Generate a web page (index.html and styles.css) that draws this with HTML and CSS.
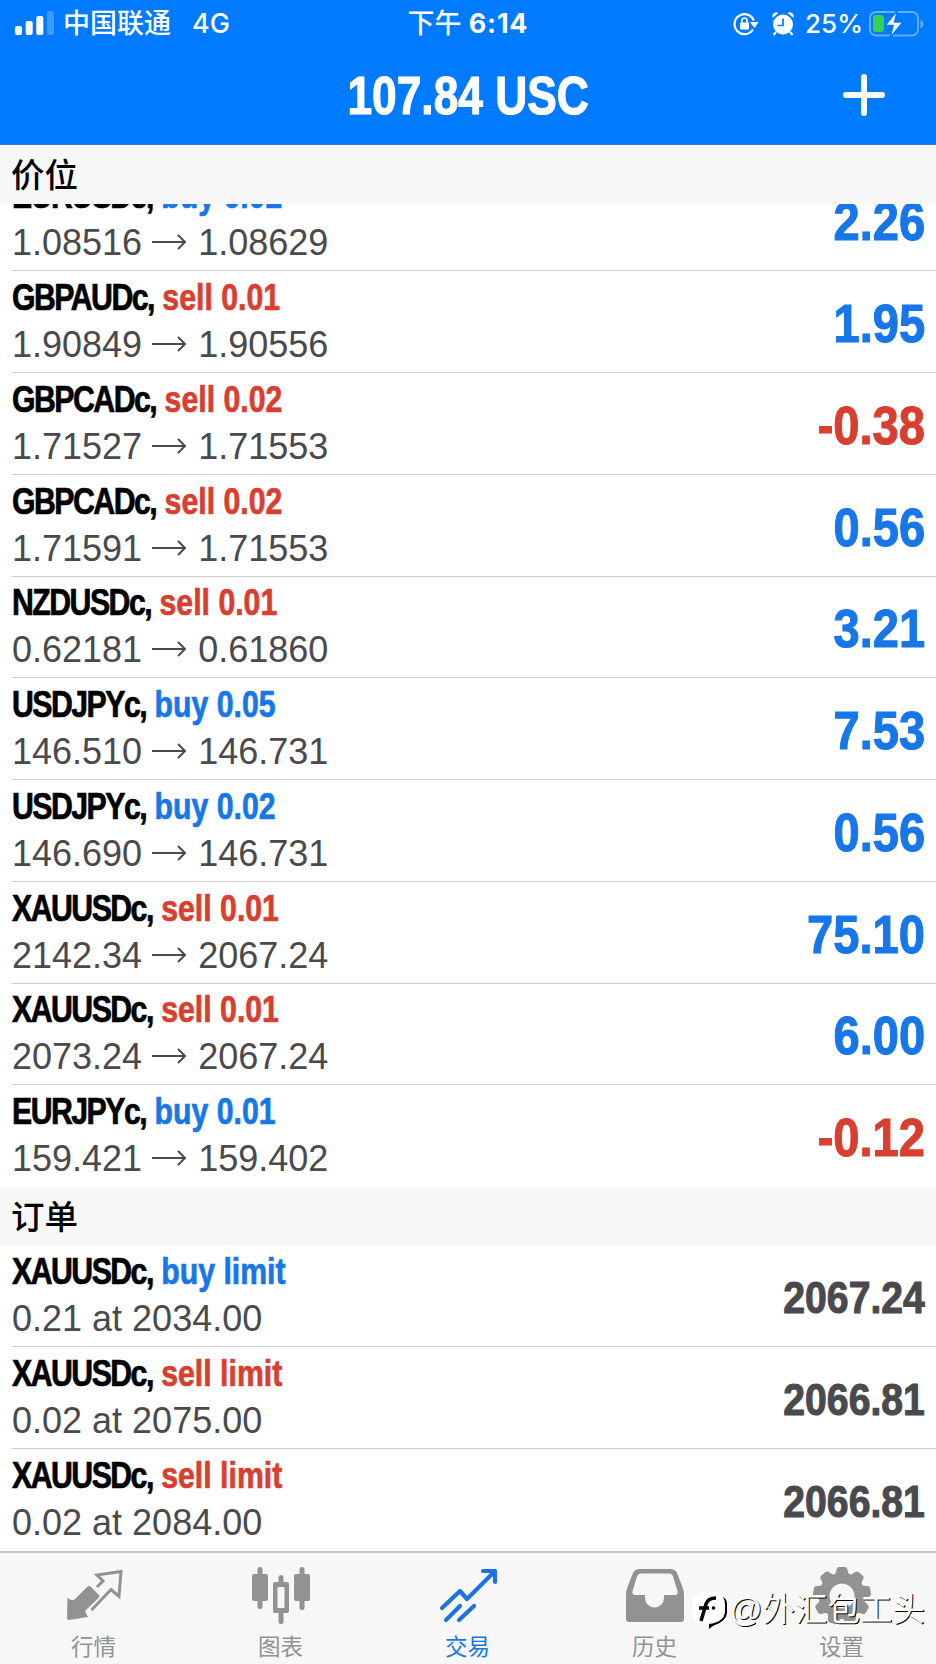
FILE: index.html
```html
<!DOCTYPE html>
<html lang="zh-CN">
<head>
    <meta charset="UTF-8">
    <meta name="viewport" content="width=device-width, initial-scale=1.0">
    <title>交易</title>
    <link rel="stylesheet" href="styles.css">
</head>
<body>
    <div class="app">
        <header class="header">
            <div class="status">
                <div class="status__left">
                    <svg class="signal" width="39" height="26" viewBox="0 0 39 26" fill="#fff">
                        <rect x="0" y="16" width="7" height="9" rx="2"/>
                        <rect x="10.7" y="11" width="7" height="14" rx="2"/>
                        <rect x="21.3" y="6" width="7" height="19" rx="2"/>
                        <rect x="32" y="1" width="7" height="24" rx="2" opacity="0.25"/>
                    </svg>
                    <span class="carrier">中国联通</span>
                    <span class="network">4G</span>
                </div>
                <div class="status__time">下午 <b>6:14</b></div>
                <div class="status__right">
                    <svg width="26" height="24" viewBox="0 0 26 24" fill="none" stroke="#fff" stroke-width="2.2">
                        <path d="M20 17.5A10 10 0 1 1 20.8 8.5"/>
                        <path d="M17 10h8.500l-4 6z" fill="#fff" stroke="none"/>
                        <rect x="7" y="10.5" width="9" height="7" rx="1" fill="#fff" stroke="none"/>
                        <path d="M9 11V8.5a2.5 2.5 0 0 1 5 0V11" stroke-width="1.6"/>
                    </svg>
                    <svg class="alarm" width="22" height="24" viewBox="0 0 22 24" fill="#fff">
                        <circle cx="11" cy="12.5" r="10"/>
                        <path d="M.6 5.8A4 4 0 0 1 6.5 1z"/>
                        <path d="M21.4 5.8A4 4 0 0 0 15.5 1z"/>
                        <path d="M4 20l-2.500 3M18 20l2.500 3" stroke="#fff" stroke-width="2.2"/>
                        <path d="M11 6.5v7H5.5" fill="none" stroke="#007aff" stroke-width="1.7"/>
                    </svg>
                    <span class="percent">25%</span>
                    <svg class="battery" width="56" height="28" viewBox="0 0 56 28">
                        <rect x="1" y="2" width="48" height="23.5" rx="6" fill="none" stroke="#fff" stroke-opacity="0.4" stroke-width="2"/>
                        <path d="M51.5 10v8q3-1 3-4t-3-4z" fill="#fff" fill-opacity="0.4"/>
                        <rect x="4" y="5" width="11" height="17" rx="3" fill="#34d058"/>
                        <path d="M28.500 0L16 15.500h8L21 28 34 12h-8.500z" fill="#fff" stroke="#007aff" stroke-width="1.5"/>
                    </svg>
                </div>
            </div>
            <div class="titlebar">
                <h1 class="titlebar__text">107.84 USC</h1>
                <svg class="titlebar__add" width="42" height="42" viewBox="0 0 42 42" stroke="#fff" stroke-width="6" stroke-linecap="round">
                    <path d="M21 3v36M3 21h36"/>
                </svg>
            </div>
        </header>

        <h2 class="section">价位</h2>
        <!-- Open positions, scrolled partly under the section title -->
        <div class="positions">
            <ul class="list" id="positions"></ul>
        </div>

        <h2 class="section">订单</h2>
        <ul class="list list--orders" id="orders"></ul>

        <nav class="tabs">
            <div class="tab">
                <svg width="60" height="60" viewBox="0 0 60 60">
                    <path d="M3.500 29.500q4 4 7 2L23 19q2-2 4 0l8 8q1 2-.5 3L21 43l3 6-19 3q-2 0-2-2z" fill="#929292"/>
                    <path d="M33 19l6-6-6-6 24-3.500-2 25-8-7-19.500 20.500" fill="none" stroke="#929292" stroke-width="3"/>
                </svg>
                <span>行情</span>
            </div>
            <div class="tab">
                <svg width="60" height="60" viewBox="0 0 60 60" fill="#929292">
                    <rect x="1" y="6" width="16" height="27" rx="2"/>
                    <rect x="6.5" y="-1" width="5" height="42" rx="2.5"/>
                    <rect x="43" y="6" width="16" height="27" rx="2"/>
                    <rect x="48.5" y="-1" width="5" height="43" rx="2.5"/>
                    <rect x="27.5" y="7" width="5" height="49" rx="2.5"/>
                    <rect x="22" y="14" width="16" height="31" rx="2"/>
                    <rect x="26.5" y="19" width="7" height="21" rx="1" fill="#f7f7f7"/>
                </svg>
                <span>图表</span>
            </div>
            <div class="tab tab--active">
                <svg width="60" height="60" viewBox="0 0 60 60" fill="none" stroke="#1a75e0" stroke-width="4.2" stroke-linecap="round" stroke-linejoin="round">
                    <path d="M4 40l18-17 7 8L57 3M45 3h12v11"/>
                    <path d="M8 52l14-14M21 52l15-14"/>
                </svg>
                <span>交易</span>
            </div>
            <div class="tab">
                <svg width="60" height="60" viewBox="0 0 60 60">
                    <path fill="#929292" fill-rule="evenodd" d="M15 1h30q5 0 7 4l5.500 14q1.500 4 1.500 8v24q0 3-3 3H4q-3 0-3-3V27q0-4 1.500-8L8 5q2-4 7-4zM16 5.500q-3 0-4 3L7.500 23Q7 27 10 27h10v3a9.500 9.500 0 0 0 19 0v-3h11q3 0 2.500-4L48 8.500q-1-3-4-3z"/>
                </svg>
                <span>历史</span>
            </div>
            <div class="tab">
                <svg width="60" height="60" viewBox="0 0 60 60">
                    <g fill="#929292" id="gear"></g>
                </svg>
                <span>设置</span>
            </div>
        </nav>

        <!-- Author mark, floats over the tabs -->
        <div class="mark">
            <svg width="36" height="40" viewBox="0 0 36 40">
                <path d="M10 2h14q8 1 8 11v9q-1 8-13 11H10Q1 32 0 22V14Q1 3 10 2z" fill="#fff"/>
                <path d="M31 7q2 3 2 8v7q-1 10-16 12v5q3-3 6-4 11-4 12-12v-9q0-5-4-7z"/>
                <path d="M9 31l5-17q2-6 10-6M7 18h10" fill="none" stroke="#000" stroke-width="3.5"/>
                <circle cx="21.5" cy="18" r="1.8"/>
            </svg>
            <span class="mark__name">@外汇包工头</span>
        </div>
    </div>

    <script>
        const positions = [
            ['EURUSDc', 'buy', '0.02', '1.08516', '1.08629', '2.26'],
            ['GBPAUDc', 'sell', '0.01', '1.90849', '1.90556', '1.95'],
            ['GBPCADc', 'sell', '0.02', '1.71527', '1.71553', '-0.38'],
            ['GBPCADc', 'sell', '0.02', '1.71591', '1.71553', '0.56'],
            ['NZDUSDc', 'sell', '0.01', '0.62181', '0.61860', '3.21'],
            ['USDJPYc', 'buy', '0.05', '146.510', '146.731', '7.53'],
            ['USDJPYc', 'buy', '0.02', '146.690', '146.731', '0.56'],
            ['XAUUSDc', 'sell', '0.01', '2142.34', '2067.24', '75.10'],
            ['XAUUSDc', 'sell', '0.01', '2073.24', '2067.24', '6.00'],
            ['EURJPYc', 'buy', '0.01', '159.421', '159.402', '-0.12']
        ];

        const orders = [
            ['XAUUSDc', 'buy', '0.21 at 2034.00', '2067.24'],
            ['XAUUSDc', 'sell', '0.02 at 2075.00', '2066.81'],
            ['XAUUSDc', 'sell', '0.02 at 2084.00', '2066.81']
        ];

        const arrow = '<svg class="arrow" width="35" height="16" viewBox="0 0 35 16"><path d="M0 8h33M26 1l7 7-7 7"/></svg>';

        // Build one list row
        function row(symbol, side, what, detail, value, valueClass) {
            return `
                <li class="row">
                    <div class="row__info">
                        <div class="row__name"><span class="symbol">${symbol},</span> <span class="${side}">${side} ${what}</span></div>
                        <div class="row__price">${detail}</div>
                    </div>
                    <div class="row__value ${valueClass}">${value}</div>
                </li>`;
        }

        document.getElementById('positions').innerHTML = positions.map(p =>
            row(p[0], p[1], p[2], `<span>${p[3]}</span>${arrow}<span>${p[4]}</span>`, p[5], p[5][0] === '-' ? 'sell' : 'buy')
        ).join('');

        document.getElementById('orders').innerHTML = orders.map(o =>
            row(o[0], o[1], 'limit', o[2], o[3], 'row__value--order')
        ).join('');

        // Gear: ring with nine teeth
        let gear = '<path fill-rule="evenodd" d="M30 5a23 23 0 1 0 .01 0zM30 15.500a12.500 12.500 0 1 1-.01 0z"/>';
        for (let i = 0; i < 9; i++) {
            gear += `<path d="M21 8q3-2 3.500-6 .5-3 3-3h5q2.500 0 3 3 .5 4 3.500 6z" transform="rotate(${i * 40} 30 28)"/>`;
        }
        document.getElementById('gear').innerHTML = gear;
    </script>
</body>
</html>
```
FILE: styles.css
```css
* {
    box-sizing: border-box;
}

body {
    margin: 0;
    background-color: #fff;
    font-family: "Liberation Sans", "Noto Sans CJK SC", sans-serif;
    color: #000;
}

.app {
    position: relative;
    width: 936px;
    height: 1664px;
    overflow: hidden;
    display: flex;
    flex-direction: column;
}

/* Header */
.header {
    height: 145px;
    flex: none;
    background-color: #007aff;
    color: #fff;
    border-bottom: 1px solid #3f7fc8;
}

.status {
    display: grid;
    grid-template-columns: 1fr auto 1fr;
    align-items: center;
    height: 47px;
    padding: 0 11px 0 15px;
    font-family: Inter, "Noto Sans CJK SC", sans-serif;
    font-size: 26px;
    font-weight: 500;
}

.status__left,
.status__right {
    display: flex;
    align-items: center;
    line-height: 36px;
}

.status__right {
    justify-content: flex-end;
}

.signal {
    margin-top: -1px;
}

.carrier {
    margin-left: 9px;
    margin-top: 1px;
    font-size: 27px;
}

.network {
    margin-left: 21px;
    margin-top: 1px;
    font-size: 27px;
}

.status__time {
    margin: 1px 4px 0 0;
    font-size: 27px;
    line-height: 36px;
}

.status__time b {
    font-weight: 700;
    letter-spacing: 0.8px;
}

.alarm {
    margin-left: 13px;
}

.percent {
    margin-left: 11px;
    margin-top: 1px;
}

.battery {
    margin-left: 6px;
}

.titlebar {
    position: relative;
    height: 96px;
    display: flex;
    justify-content: center;
    align-items: center;
}

.titlebar__text {
    margin: 0;
    font-size: 54px;
    line-height: 94px;
    white-space: nowrap;
    transform: scaleX(0.82);
    -webkit-text-stroke: 1.2px #fff;
}

.titlebar__add {
    position: absolute;
    right: 51px;
    top: 27px;
}

/* Lists */
.section {
    margin: 0;
    height: 58.5px;
    flex: none;
    padding-left: 11px;
    background-color: #f7f7f7;
    font-family: "Noto Sans CJK SC", sans-serif;
    font-size: 33.5px;
    font-weight: 500;
    line-height: 55px;
}

.positions {
    height: 983.5px;
    flex: none;
    overflow: hidden;
    display: flex;
    flex-direction: column;
    justify-content: flex-end;
}

.list {
    list-style-type: none;
    margin: 0;
    padding: 0;
}

.row {
    display: flex;
    justify-content: space-between;
    align-items: center;
    height: 101.75px;
    margin-left: 12px;
    padding-right: 11px;
    border-bottom: 1px solid #cfcfd1;
}

.row:last-child {
    border-bottom-color: transparent;
}

.row__name {
    font-size: 36px;
    font-weight: bold;
    line-height: 46px;
    white-space: nowrap;
    transform: scaleX(0.84);
    transform-origin: left;
    -webkit-text-stroke: 0.7px;
}

.symbol {
    letter-spacing: -1.8px;
}

.row__price {
    display: flex;
    align-items: center;
    font-size: 36px;
    line-height: 47px;
    color: #4a4a4e;
    white-space: pre;
}

.arrow {
    margin: 0 11px 1px 10px;
    fill: none;
    stroke: #4a4a4e;
    stroke-width: 2;
}

.row__value {
    padding-top: 4px;
    font-size: 53.5px;
    font-weight: bold;
    transform: scaleX(0.88);
    transform-origin: right;
    -webkit-text-stroke: 1.1px;
}

.row__value--order {
    padding-top: 5px;
    font-size: 44.5px;
    color: #4a4a4e;
}

.buy {
    color: #1777e8;
}

.sell {
    color: #d93f31;
}

/* Bottom tabs */
.tabs {
    position: absolute;
    left: 0;
    right: 0;
    bottom: 0;
    height: 113px;
    display: flex;
    padding-right: 1px;
    background-color: #f7f7f7;
    border-top: 2px solid #c3c4c8;
}

.tab {
    flex: 1;
    display: flex;
    flex-direction: column;
    align-items: center;
    padding-top: 15px;
    color: #929292;
    font-family: "Noto Sans CJK SC", sans-serif;
    font-size: 22.5px;
    line-height: 34px;
}

.tab svg {
    overflow: visible;
}

.tab--active {
    color: #1a75e0;
}

.mark {
    position: absolute;
    right: 11px;
    bottom: 32px;
    display: flex;
    align-items: center;
    color: #fff;
}

.mark__name {
    margin-left: 2px;
    font-family: "Liberation Sans", "Noto Sans CJK SC", sans-serif;
    font-size: 32.5px;
    line-height: 44px;
    text-shadow: 1px 1px 0 #000;
}
```
